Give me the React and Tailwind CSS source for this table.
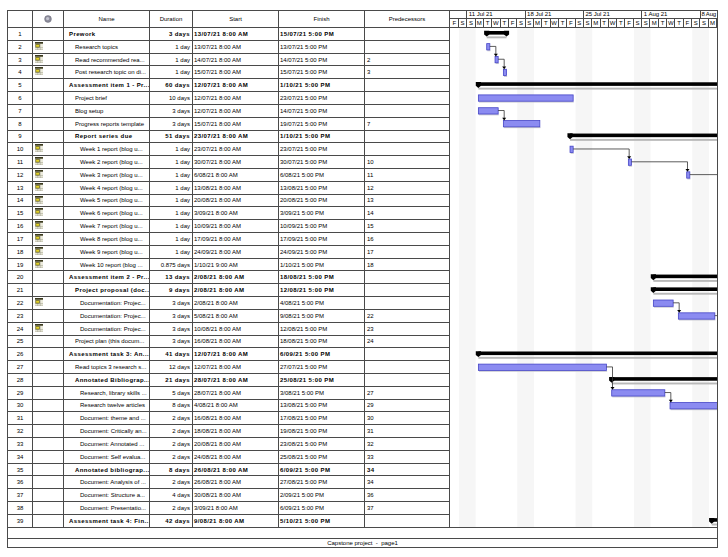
import React from "react";

const R = [
  [1, "Prework", "3 days", "13/07/21 8:00 AM", "15/07/21 5:00 PM", "", 1, true, false],
  [2, "Research topics", "1 day", "13/07/21 8:00 AM", "13/07/21 5:00 PM", "", 2, false, true],
  [3, "Read recommended rea...", "1 day", "14/07/21 8:00 AM", "14/07/21 5:00 PM", "2", 2, false, true],
  [4, "Post research topic on di...", "1 day", "15/07/21 8:00 AM", "15/07/21 5:00 PM", "3", 2, false, true],
  [5, "Assessment item 1 - Pr...", "60 days", "12/07/21 8:00 AM", "1/10/21 5:00 PM", "", 1, true, false],
  [6, "Project brief", "10 days", "12/07/21 8:00 AM", "23/07/21 5:00 PM", "", 2, false, false],
  [7, "Blog setup", "3 days", "12/07/21 8:00 AM", "14/07/21 5:00 PM", "", 2, false, false],
  [8, "Progress reports template", "3 days", "15/07/21 8:00 AM", "19/07/21 5:00 PM", "7", 2, false, false],
  [9, "Report series due", "51 days", "23/07/21 8:00 AM", "1/10/21 5:00 PM", "", 2, true, false],
  [10, "Week 1 report (blog u...", "1 day", "23/07/21 8:00 AM", "23/07/21 5:00 PM", "", 3, false, true],
  [11, "Week 2 report (blog u...", "1 day", "30/07/21 8:00 AM", "30/07/21 5:00 PM", "10", 3, false, true],
  [12, "Week 3 report (blog u...", "1 day", "6/08/21 8:00 AM", "6/08/21 5:00 PM", "11", 3, false, true],
  [13, "Week 4 report (blog u...", "1 day", "13/08/21 8:00 AM", "13/08/21 5:00 PM", "12", 3, false, true],
  [14, "Week 5 report (blog u...", "1 day", "20/08/21 8:00 AM", "20/08/21 5:00 PM", "13", 3, false, true],
  [15, "Week 6 report (blog u...", "1 day", "3/09/21 8:00 AM", "3/09/21 5:00 PM", "14", 3, false, true],
  [16, "Week 7 report (blog u...", "1 day", "10/09/21 8:00 AM", "10/09/21 5:00 PM", "15", 3, false, true],
  [17, "Week 8 report (blog u...", "1 day", "17/09/21 8:00 AM", "17/09/21 5:00 PM", "16", 3, false, true],
  [18, "Week 9 report (blog u...", "1 day", "24/09/21 8:00 AM", "24/09/21 5:00 PM", "17", 3, false, true],
  [19, "Week 10 report (blog ...", "0.875 days", "1/10/21 9:00 AM", "1/10/21 5:00 PM", "18", 3, false, true],
  [20, "Assessment item 2 - Pr...", "13 days", "2/08/21 8:00 AM", "18/08/21 5:00 PM", "", 1, true, false],
  [21, "Project proposal (doc...", "9 days", "2/08/21 8:00 AM", "12/08/21 5:00 PM", "", 2, true, false],
  [22, "Documentation: Projec...", "3 days", "2/08/21 8:00 AM", "4/08/21 5:00 PM", "", 3, false, true],
  [23, "Documentation: Projec...", "3 days", "5/08/21 8:00 AM", "9/08/21 5:00 PM", "22", 3, false, false],
  [24, "Documentation: Projec...", "3 days", "10/08/21 8:00 AM", "12/08/21 5:00 PM", "23", 3, false, true],
  [25, "Project plan (this docum...", "3 days", "16/08/21 8:00 AM", "18/08/21 5:00 PM", "24", 2, false, false],
  [26, "Assessment task 3: An...", "41 days", "12/07/21 8:00 AM", "6/09/21 5:00 PM", "", 1, true, false],
  [27, "Read topics 3 research s...", "12 days", "12/07/21 8:00 AM", "27/07/21 5:00 PM", "", 2, false, false],
  [28, "Annotated Bibliograp...", "21 days", "28/07/21 8:00 AM", "25/08/21 5:00 PM", "", 2, true, false],
  [29, "Research, library skills ...", "5 days", "28/07/21 8:00 AM", "3/08/21 5:00 PM", "27", 3, false, false],
  [30, "Research twelve articles", "8 days", "4/08/21 8:00 AM", "13/08/21 5:00 PM", "29", 3, false, false],
  [31, "Document: theme and ...", "2 days", "16/08/21 8:00 AM", "17/08/21 5:00 PM", "30", 3, false, false],
  [32, "Document: Critically an...", "2 days", "18/08/21 8:00 AM", "19/08/21 5:00 PM", "31", 3, false, false],
  [33, "Document: Annotated ...", "2 days", "20/08/21 8:00 AM", "23/08/21 5:00 PM", "32", 3, false, false],
  [34, "Document: Self evalua...", "2 days", "24/08/21 8:00 AM", "25/08/21 5:00 PM", "33", 3, false, false],
  [35, "Annotated bibliograp...", "8 days", "26/08/21 8:00 AM", "6/09/21 5:00 PM", "34", 2, true, false],
  [36, "Document: Analysis of ...", "2 days", "26/08/21 8:00 AM", "27/08/21 5:00 PM", "34", 3, false, false],
  [37, "Document: Structure a...", "4 days", "30/08/21 8:00 AM", "2/09/21 5:00 PM", "36", 3, false, false],
  [38, "Document: Presentatio...", "2 days", "3/09/21 8:00 AM", "6/09/21 5:00 PM", "37", 3, false, false],
  [39, "Assessment task 4: Fin...", "42 days", "9/08/21 8:00 AM", "5/10/21 5:00 PM", "", 1, true, false],
];

const DW = 8.333;
const X0 = 0.6;
const RH = 12.82;

function tx(s) {
  const [date, time, ap] = s.split(" ");
  const [d, m, y] = date.split("/").map(Number);
  let [h, mi] = time.split(":").map(Number);
  if (ap === "PM" && h !== 12) h += 12;
  const days = (Date.UTC(2000 + y, m - 1, d) - Date.UTC(2021, 6, 9)) / 864e5;
  return X0 + (days + (h + mi / 60) / 24) * DW;
}

function CalIcon() {
  return (
    <svg width="8" height="8" viewBox="0 0 8 8">
      <rect x="0" y="0" width="8" height="8" fill="#ecebdc" />
      <line x1="2.7" y1="1.6" x2="2.7" y2="8" stroke="#a09f8c" strokeWidth="0.5" />
      <line x1="5.3" y1="1.6" x2="5.3" y2="8" stroke="#a09f8c" strokeWidth="0.5" />
      <line x1="0" y1="5.5" x2="8" y2="5.5" stroke="#a09f8c" strokeWidth="0.5" />
      <line x1="0" y1="7.3" x2="8" y2="7.3" stroke="#a09f8c" strokeWidth="0.5" />
      <rect x="0" y="0" width="8" height="1.7" fill="#3b3a1e" />
      <rect x="0.8" y="2.3" width="3.6" height="2.8" fill="#e3d22a" stroke="#4d4a18" strokeWidth="0.6" />
    </svg>
  );
}

function InfoIcon() {
  return (
    <svg width="8" height="8" viewBox="0 0 8 8">
      <circle cx="4" cy="4" r="3.4" fill="#8d8d9c" stroke="#6b6b78" strokeWidth="0.5" />
      <circle cx="3.6" cy="3.6" r="1.6" fill="#c4c4d0" />
    </svg>
  );
}

const days = "FSSMTWTFSSMTWTFSSMTWTFSSMTWTFSSM".split("");

function Gantt() {
  const rowsById = {};
  R.forEach((r, i) => (rowsById[r[0]] = { r, i }));
  const H = RH * R.length;
  return (
    <svg width="267" height={H - 1} viewBox={`0 0 267 ${H - 1}`} className="block">
      {[1, 8, 15, 22, 29].map((k) => (
        <rect key={k} x={X0 + k * DW} y="0" width={2 * DW} height={H} fill="#f6f6f6" />
      ))}
      {R.map((r, i) => {
        const y0 = i * RH;
        const xs = tx(r[3]);
        const xe = tx(r[4]);
        if (r[7]) {
          return (
            <g key={i}>
              <rect x={xs} y={y0 + 8.4} width={xe - xs} height="1.9" fill="#b9b9b9" />
              <rect x={xs} y={y0 + 3} width={xe - xs} height="3.6" fill="#000" />
              <polygon
                points={`${xs - 2.6},${y0 + 2.8} ${xs + 2.6},${y0 + 2.8} ${xs + 2.6},${y0 + 6.4} ${xs},${y0 + 8.6} ${xs - 2.6},${y0 + 6.4}`}
                fill="#000"
              />
              <polygon
                points={`${xe - 2.6},${y0 + 2.8} ${xe + 2.6},${y0 + 2.8} ${xe + 2.6},${y0 + 6.4} ${xe},${y0 + 8.6} ${xe - 2.6},${y0 + 6.4}`}
                fill="#000"
              />
            </g>
          );
        }
        return (
          <g key={i}>
            <rect x={xs + 0.6} y={y0 + 9.3} width={xe - xs} height="1.1" fill="#c4c4cc" />
            <rect
              x={xs}
              y={y0 + 2.8}
              width={xe - xs}
              height="6.3"
              fill="#8b8bf1"
              stroke="#4545c6"
              strokeWidth="0.8"
            />
          </g>
        );
      })}
      {R.map((r, i) => {
        if (!r[5]) return null;
        const p = rowsById[Number(r[5])];
        if (!p) return null;
        const pe = tx(p.r[4]);
        const ym = p.i * RH + 5.6;
        const ss = tx(r[3]);
        const vx = Math.max(ss + 0.8, pe + 3);
        const ys = i * RH + 2.8;
        return (
          <g key={"l" + i}>
            <path d={`M${pe} ${ym} H${vx} V${ys - 2.4}`} fill="none" stroke="#333" strokeWidth="0.8" />
            <polygon points={`${vx - 2},${ys - 2.8} ${vx + 2},${ys - 2.8} ${vx},${ys}`} fill="#000" />
          </g>
        );
      })}
    </svg>
  );
}

const cellB = "border-r border-[#4a4a4a] h-full flex items-center overflow-hidden whitespace-nowrap";

export default function App() {
  return (
    <div className="w-[728px] h-[557px] bg-white pt-[10px] pl-[7px] font-['Liberation_Sans',Arial,sans-serif] text-black text-[6px] leading-none">
      <div className="w-[711px] border border-[#4a4a4a] flex flex-col">
        <div className="flex">
          <div className="w-[442px] flex flex-col">
            <div className="h-[17px] flex border-b border-[#4a4a4a]">
              <div className={`${cellB} w-[25px]`} />
              <div className={`${cellB} w-[31px] justify-center`}>
                <InfoIcon />
              </div>
              <div className={`${cellB} w-[86px] justify-center`}>Name</div>
              <div className={`${cellB} w-[43px] justify-center`}>Duration</div>
              <div className={`${cellB} w-[86px] justify-center`}>Start</div>
              <div className={`${cellB} w-[86px] justify-center`}>Finish</div>
              <div className={`${cellB} w-[85px] justify-center`}>Predecessors</div>
            </div>
            {R.map((r) => {
              const bold = r[7];
              const bcls = bold ? "font-bold tracking-[0.4px]" : "";
              const pad = r[6] === 1 ? "pl-[5px]" : r[6] === 2 ? "pl-[11px]" : "pl-[16px]";
              return (
                <div key={r[0]} className="h-[12.82px] flex border-b border-[#4a4a4a]">
                  <div className={`${cellB} w-[25px] justify-center`}>{r[0]}</div>
                  <div className="border-r border-[#4a4a4a] h-full w-[31px] flex items-start pt-[1px] pl-[2px]">
                    {r[8] ? <CalIcon /> : null}
                  </div>
                  <div className={`${cellB} w-[86px] ${pad} ${bcls}`}>{r[1]}</div>
                  <div className={`${cellB} w-[43px] justify-end pr-[2px] ${bcls}`}>{r[2]}</div>
                  <div className={`${cellB} w-[86px] pl-[1px] ${bcls}`}>{r[3]}</div>
                  <div className={`${cellB} w-[86px] pl-[1px] ${bcls}`}>{r[4]}</div>
                  <div className={`${cellB} w-[85px] pl-[2px] ${bcls}`}>{r[5]}</div>
                </div>
              );
            })}
          </div>
          <div className="w-[267px] flex flex-col overflow-hidden">
            <div className="h-[17px] flex flex-col border-b border-[#4a4a4a]">
              <div className="h-[8px] flex border-b border-[#4a4a4a] whitespace-nowrap overflow-hidden">
                <div className="w-[17.27px] shrink-0 border-r border-[#4a4a4a]" />
                {["11 Jul 21", "18 Jul 21", "25 Jul 21", "1 Aug 21"].map((w) => (
                  <div key={w} className="w-[58.33px] shrink-0 border-r border-[#4a4a4a] pl-[1.5px] flex items-center">
                    {w}
                  </div>
                ))}
                <div className="w-[17px] shrink-0 pl-[1px] flex items-center tracking-[-0.2px]">8 Aug</div>
              </div>
              <div className="h-[9px] flex whitespace-nowrap overflow-hidden pl-[0.6px]">
                {days.map((d, i) => (
                  <div
                    key={i}
                    className="w-[8.333px] shrink-0 border-r border-[#4a4a4a] flex items-center justify-center"
                  >
                    {d}
                  </div>
                ))}
              </div>
            </div>
            <div className="h-[499.98px] border-b border-[#4a4a4a] overflow-hidden">
              <Gantt />
            </div>
          </div>
        </div>
        <div className="h-[11px] border-b border-[#4a4a4a]" />
        <div className="h-[8px] flex items-center justify-center">Capstone project&nbsp;&nbsp;-&nbsp;&nbsp;page1</div>
      </div>
    </div>
  );
}
